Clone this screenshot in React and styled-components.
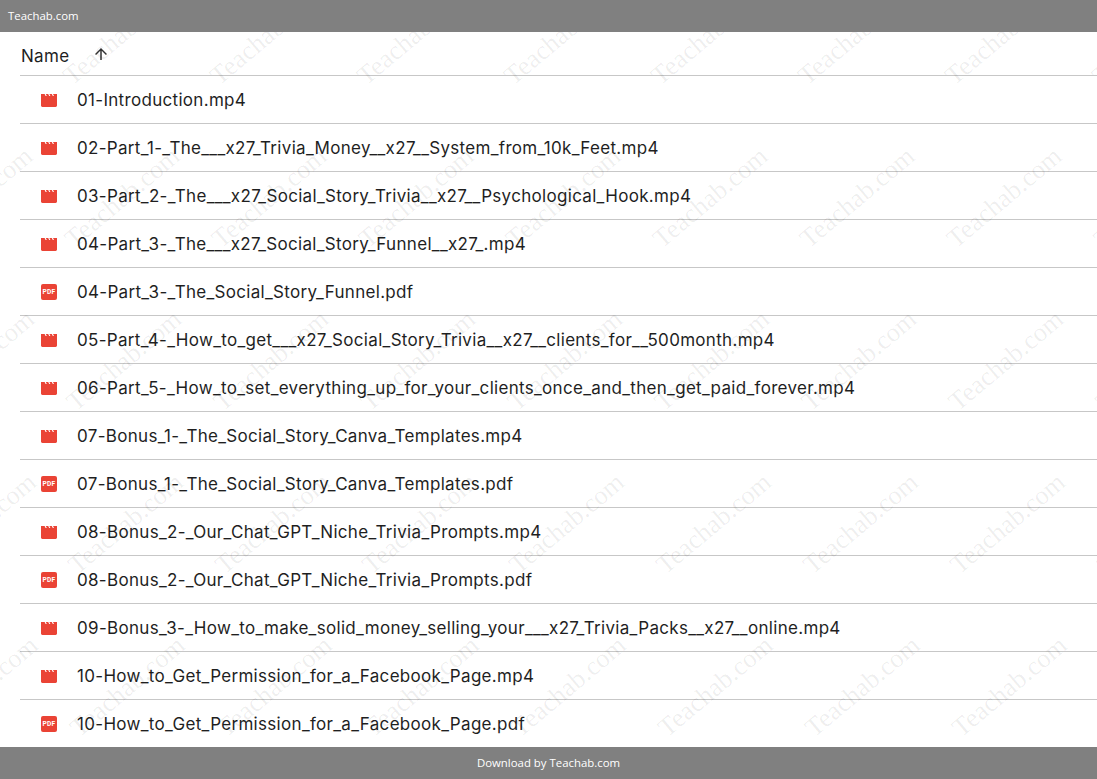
import React from 'react'
import styled, { createGlobalStyle } from 'styled-components'

const GlobalStyle = createGlobalStyle`
html, body {
  margin: 0;
  padding: 0;
  background: #fff;
}
`

const Page = styled.div`
position: relative;
display: flex;
flex-direction: column;
height: 100vh;
overflow: hidden;
font-family: Inter, Roboto, sans-serif;
color: #1f1f1f;
`

const Bar = styled.div`
box-sizing: border-box;
position: relative;
z-index: 2;
flex: none;
display: flex;
align-items: center;
justify-content: ${props => props.$center ? 'center' : 'flex-start'};
height: 32px;
padding: 0 8px 1px;
background: #808080;
color: #fff;
font-family: "Open Sans", sans-serif;
font-size: 11.4px;
`

const Main = styled.main`
flex: 1;
min-height: 0;
overflow: hidden;
padding-left: 20px;
`

const HeadRow = styled.div`
box-sizing: border-box;
display: flex;
align-items: center;
height: 44px;
border-bottom: 1px solid #c7c7c7;
padding: 4px 0 0 1px;
font-size: 17px;
letter-spacing: 0.31px;
`

const SortIcon = styled.svg`
width: 18px;
height: 18px;
margin: -3px 0 0 23px;
fill: #333;
`

const FileRow = styled.div`
box-sizing: border-box;
display: flex;
align-items: center;
height: 48px;
border-bottom: 1px solid #c7c7c7;
padding: 1px 0 0 21px;
font-size: 17px;
letter-spacing: 0.31px;
white-space: nowrap;
`

const IconBox = styled.svg`
flex: none;
width: 16px;
height: 16px;
margin-right: 20px;
`

const Watermarks = styled.div`
position: absolute;
z-index: 1;
left: -100px;
top: -47px;
display: grid;
grid-template-columns: repeat(9, 147px);
grid-auto-rows: 163px;
pointer-events: none;
`

const Mark = styled.span`
display: flex;
align-items: center;
justify-content: center;
white-space: nowrap;
font-family: "Liberation Serif", serif;
font-size: 26.5px;
color: rgba(0, 0, 0, 0.07);
transform: translateX(${props => props.$row * 1.75}px) rotate(-40deg);
`

const VideoIcon = () => (
  <IconBox viewBox="0 -1 16 16">
    <path fill="#ea4335" d="M0 1h3.6l1 2h1.2l-1-2h2.4l1 2h1.2l-1-2h2.4l1 2H13l-1-2h4v11.6c0 .8-.6 1.4-1.4 1.4H1.4C.6 14 0 13.4 0 12.6z" />
  </IconBox>
)

const PdfIcon = () => (
  <IconBox viewBox="0 0 16 16">
    <rect width="16" height="16" rx="2" fill="#ea4335" />
    <text x="8" y="10.4" textAnchor="middle" fontFamily="Roboto, sans-serif" fontWeight="700" fontSize="6.6" fill="#fff">PDF</text>
  </IconBox>
)

const files = [
  '01-Introduction.mp4',
  '02-Part_1-_The___x27_Trivia_Money__x27__System_from_10k_Feet.mp4',
  '03-Part_2-_The___x27_Social_Story_Trivia__x27__Psychological_Hook.mp4',
  '04-Part_3-_The___x27_Social_Story_Funnel__x27_.mp4',
  '04-Part_3-_The_Social_Story_Funnel.pdf',
  '05-Part_4-_How_to_get___x27_Social_Story_Trivia__x27__clients_for__500month.mp4',
  '06-Part_5-_How_to_set_everything_up_for_your_clients_once_and_then_get_paid_forever.mp4',
  '07-Bonus_1-_The_Social_Story_Canva_Templates.mp4',
  '07-Bonus_1-_The_Social_Story_Canva_Templates.pdf',
  '08-Bonus_2-_Our_Chat_GPT_Niche_Trivia_Prompts.mp4',
  '08-Bonus_2-_Our_Chat_GPT_Niche_Trivia_Prompts.pdf',
  '09-Bonus_3-_How_to_make_solid_money_selling_your___x27_Trivia_Packs__x27__online.mp4',
  '10-How_to_Get_Permission_for_a_Facebook_Page.mp4',
  '10-How_to_Get_Permission_for_a_Facebook_Page.pdf',
]

const App = () => {
  const marks = []
  for (let row = 0; row < 5; row++) {
    for (let col = 0; col < 9; col++) {
      marks.push(<Mark key={row + '-' + col} $row={row}>Teachab.com</Mark>)
    }
  }

  return (
    <Page>
      <GlobalStyle />
      <Bar>Teachab.com</Bar>
      <Main>
        <HeadRow>
          Name
          <SortIcon viewBox="0 0 24 24">
            <path d="M4 12l1.41 1.41L11 7.83V20h2V7.83l5.58 5.59L20 12l-8-8-8 8z" />
          </SortIcon>
        </HeadRow>
        {files.map(name => (
          <FileRow key={name}>
            {name.endsWith('.pdf') ? <PdfIcon /> : <VideoIcon />}
            {name}
          </FileRow>
        ))}
      </Main>
      <Bar $center>Download by Teachab.com</Bar>
      <Watermarks>{marks}</Watermarks>
    </Page>
  )
}

export default App
